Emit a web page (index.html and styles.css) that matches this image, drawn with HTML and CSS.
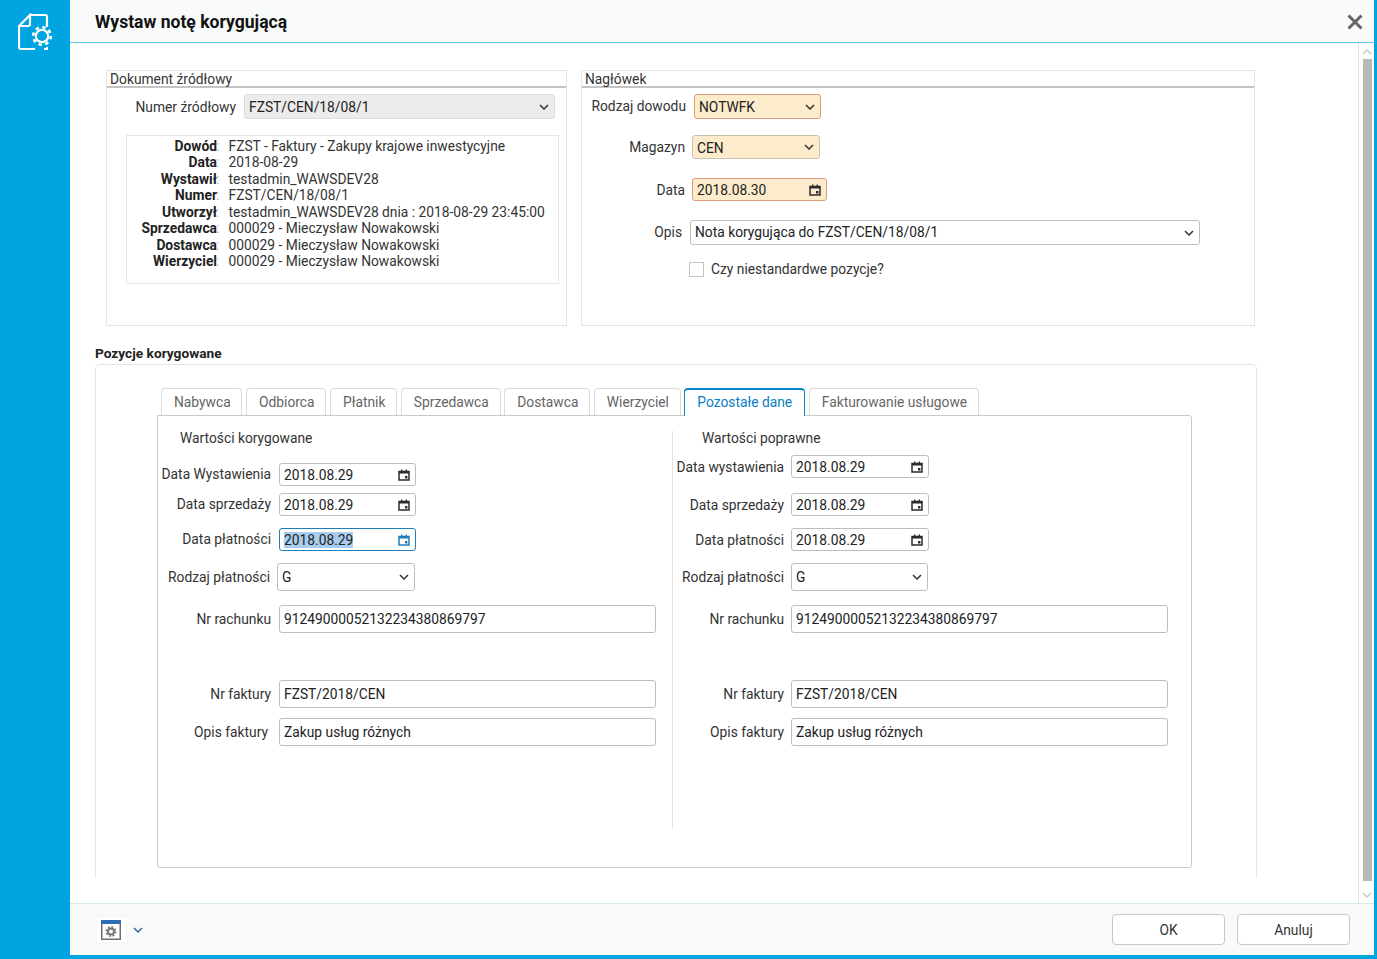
FILE: index.html
```html
<!DOCTYPE html>
<html lang="pl">
<head>
<meta charset="utf-8">
<title>Wystaw notę korygującą</title>
<link rel="stylesheet" href="styles.css">
</head>
<body>
<svg class="defs" width="0" height="0" aria-hidden="true">
  <symbol id="cal" viewBox="0 0 12 12">
    <path d="M1 2.5h10v8.5H1z" fill="none" stroke="currentColor" stroke-width="1.5"/>
    <path d="M1 2h10v2.6H1zM3 .6h1.4V2H3zM7.6.6H9V2H7.6zM7 7h2.4v2.4H7z" fill="currentColor"/>
  </symbol>
  <symbol id="chev" viewBox="0 0 10 6">
    <path d="M1 1l4 4 4-4" fill="none" stroke="currentColor" stroke-width="1.5"/>
  </symbol>
</svg>
<div class="shell">
  <aside class="sidebar">
    <svg class="doc-icon" width="36" height="40" viewBox="0 0 36 40">
      <path d="M12 2h15a2 2 0 0 1 2 2v10M17 36H3a2 2 0 0 1-2-2V13L12 2v9a2 2 0 0 1-2 2H1" fill="none" stroke="#fff" stroke-width="2.2"/>
      <path d="M29 34v2h-3" fill="none" stroke="#fff" stroke-width="2"/>
      <circle cx="24" cy="23" r="6.2" fill="none" stroke="#fff" stroke-width="2.2"/>
      <circle cx="24" cy="23" r="8.8" fill="none" stroke="#fff" stroke-width="2.6" stroke-dasharray="3.4 3.51"/>
    </svg>
  </aside>
  <main class="dialog">
    <header class="dialog-head">
      <h1 class="dialog-title">Wystaw notę korygującą</h1>
      <svg class="close" width="16" height="16" viewBox="0 0 16 16"><path d="M1.5 1.5l13 13M14.5 1.5l-13 13" stroke="#666" stroke-width="3" fill="none"/></svg>
    </header>
    <div class="scroll-area">
      <div class="content">
        <div class="panels">
          <section class="panel panel-src">
            <div class="panel-title">Dokument źródłowy</div>
            <div class="row src-row">
              <div class="lbl lbl-src">Numer źródłowy</div>
              <div class="field sel gray w-src"><span>FZST/CEN/18/08/1</span><svg class="chev"><use href="#chev"/></svg></div>
            </div>
            <div class="info">
              <div class="info-row"><b>Dowód<i>:</i></b><span>FZST - Faktury - Zakupy krajowe inwestycyjne</span></div>
              <div class="info-row"><b>Data<i>:</i></b><span>2018-08-29</span></div>
              <div class="info-row"><b>Wystawił<i>:</i></b><span>testadmin_WAWSDEV28</span></div>
              <div class="info-row"><b>Numer<i>:</i></b><span>FZST/CEN/18/08/1</span></div>
              <div class="info-row"><b>Utworzył<i>:</i></b><span>testadmin_WAWSDEV28 dnia : 2018-08-29 23:45:00</span></div>
              <div class="info-row"><b>Sprzedawca<i>:</i></b><span>000029 - Mieczysław Nowakowski</span></div>
              <div class="info-row"><b>Dostawca<i>:</i></b><span>000029 - Mieczysław Nowakowski</span></div>
              <div class="info-row"><b>Wierzyciel<i>:</i></b><span>000029 - Mieczysław Nowakowski</span></div>
            </div>
          </section>
          <section class="panel panel-head">
            <div class="panel-title">Nagłówek</div>
            <div class="row h-1">
              <div class="lbl lbl-h1 lbl-date">Rodzaj dowodu</div>
              <div class="field sel req err w-127"><span>NOTWFK</span><svg class="chev"><use href="#chev"/></svg></div>
            </div>
            <div class="row h-2">
              <div class="lbl lbl-h2">Magazyn</div>
              <div class="field sel sel-24 req w-128"><span>CEN</span><svg class="chev"><use href="#chev"/></svg></div>
            </div>
            <div class="row h-3">
              <div class="lbl lbl-h2">Data</div>
              <div class="field date req err w-135"><span>2018.08.30</span><svg class="cal"><use href="#cal"/></svg></div>
            </div>
            <div class="row h-4">
              <div class="lbl lbl-h4">Opis</div>
              <div class="field sel w-510"><span>Nota korygująca do FZST/CEN/18/08/1</span><svg class="chev"><use href="#chev"/></svg></div>
            </div>
            <div class="row h-5">
              <div class="check"></div>
              <div class="check-text">Czy niestandardwe pozycje?</div>
            </div>
          </section>
        </div>
        <h2 class="section-title">Pozycje korygowane</h2>
        <section class="card">
          <nav class="tabs">
            <div class="tab">Nabywca</div>
            <div class="tab">Odbiorca</div>
            <div class="tab">Płatnik</div>
            <div class="tab">Sprzedawca</div>
            <div class="tab">Dostawca</div>
            <div class="tab">Wierzyciel</div>
            <div class="tab active">Pozostałe dane</div>
            <div class="tab">Fakturowanie usługowe</div>
          </nav>
          <div class="tab-panel">
            <div class="col col-left">
              <div class="col-head">Wartości korygowane</div>
              <div class="row mt-18"><div class="lbl lbl-date">Data Wystawienia</div><div class="field date w-137"><span>2018.08.29</span><svg class="cal"><use href="#cal"/></svg></div></div>
              <div class="row mt-7"><div class="lbl lbl-date">Data sprzedaży</div><div class="field date w-137"><span>2018.08.29</span><svg class="cal"><use href="#cal"/></svg></div></div>
              <div class="row mt-12"><div class="lbl lbl-date">Data płatności</div><div class="field date w-137 focus"><span><mark class="sel-text">2018.08.29</mark></span><svg class="cal"><use href="#cal"/></svg></div></div>
              <div class="row mt-12"><div class="lbl lbl-tall lbl-short">Rodzaj płatności</div><div class="field sel tall w-138"><span>G</span><svg class="chev"><use href="#chev"/></svg></div></div>
              <div class="row mt-14"><div class="lbl lbl-tall">Nr rachunku</div><div class="field tall w-377"><span>91249000052132234380869797</span></div></div>
              <div class="row mt-47"><div class="lbl lbl-tall">Nr faktury</div><div class="field tall w-377"><span>FZST/2018/CEN</span></div></div>
              <div class="row mt-10"><div class="lbl lbl-tall lbl-opis">Opis faktury</div><div class="field tall w-377"><span>Zakup usług różnych</span></div></div>
            </div>
            <div class="col col-right">
              <div class="col-head">Wartości poprawne</div>
              <div class="row mt-10"><div class="lbl">Data wystawienia</div><div class="field date w-138"><span>2018.08.29</span><svg class="cal"><use href="#cal"/></svg></div></div>
              <div class="row mt-15"><div class="lbl">Data sprzedaży</div><div class="field date w-138"><span>2018.08.29</span><svg class="cal"><use href="#cal"/></svg></div></div>
              <div class="row mt-12"><div class="lbl">Data płatności</div><div class="field date w-138"><span>2018.08.29</span><svg class="cal"><use href="#cal"/></svg></div></div>
              <div class="row mt-12"><div class="lbl lbl-tall">Rodzaj płatności</div><div class="field sel tall w-137"><span>G</span><svg class="chev"><use href="#chev"/></svg></div></div>
              <div class="row mt-14"><div class="lbl lbl-tall">Nr rachunku</div><div class="field tall w-377"><span>91249000052132234380869797</span></div></div>
              <div class="row mt-47"><div class="lbl lbl-tall">Nr faktury</div><div class="field tall w-377"><span>FZST/2018/CEN</span></div></div>
              <div class="row mt-10"><div class="lbl lbl-tall">Opis faktury</div><div class="field tall w-377"><span>Zakup usług różnych</span></div></div>
            </div>
          </div>
        </section>
      </div>
      <div class="scrollbar">
        <svg class="sb-arrow" width="10" height="6" viewBox="0 0 10 6"><path d="M1 5l4-4 4 4" fill="none" stroke="#c4c4c4" stroke-width="1.4"/></svg>
        <div class="sb-thumb"></div>
        <svg class="sb-arrow" width="10" height="6" viewBox="0 0 10 6"><path d="M1 1l4 4 4-4" fill="none" stroke="#c4c4c4" stroke-width="1.4"/></svg>
      </div>
    </div>
    <footer class="dialog-foot">
      <div class="tool-box">
        <svg width="20" height="20" viewBox="0 0 20 20">
          <rect x=".75" y=".75" width="18.5" height="18.5" fill="#fff" stroke="#6f6f6f" stroke-width="1.5"/>
          <rect width="20" height="4" fill="#2f6db3"/>
          <circle cx="10" cy="11.5" r="3" fill="none" stroke="#777" stroke-width="2"/>
          <circle cx="10" cy="11.5" r="4.6" fill="none" stroke="#777" stroke-width="1.8" stroke-dasharray="1.8 1.8"/>
        </svg>
      </div>
      <svg class="tool-chev" width="10" height="6" viewBox="0 0 10 6"><path d="M1 1l4 4 4-4" fill="none" stroke="#2f5f96" stroke-width="1.4"/></svg>
      <div class="foot-actions">
        <div class="btn">OK</div>
        <div class="btn">Anuluj</div>
      </div>
    </footer>
  </main>
</div>
</body>
</html>
```

FILE: styles.css
```css
* { box-sizing: border-box; }
html, body { margin: 0; height: 100%; overflow: hidden; }
body { font: 13.8px/16px Roboto, "Liberation Sans", sans-serif; color: #333; }
.defs { position: absolute; }
.shell { display: flex; height: 959px; background: #00a4e1; }
.sidebar { width: 70px; flex: none; padding: 13px 0 0 18px; }
.doc-icon { display: block; }
.dialog { width: 1304px; height: 955px; background: #fff; display: flex; flex-direction: column; }

.dialog-head { height: 43px; flex: none; background: #f9fbfb; border-bottom: 1px solid #5fcbe8; display: flex; align-items: center; justify-content: space-between; padding: 1px 11px 0 25px; }
.dialog-title { margin: 0; font-size: 17.55px; line-height: 22px; font-weight: 700; color: #111; }
.close { margin-top: 1px; }

.scroll-area { flex: 1; display: flex; min-height: 0; }
.content { flex: 1; min-width: 0; padding: 27px 0 0 25px; }
.scrollbar { width: 16px; flex: none; border-left: 1px solid #e2e2e2; display: flex; flex-direction: column; align-items: center; padding: 6px 2px 0 3px; }
.sb-thumb { width: 9px; height: 822px; background: #b9b9b9; margin: 4px 0 11px; flex: none; }
.sb-arrow { flex: none; }

.panels { display: flex; gap: 14px; margin-left: 11px; }
.panel { height: 256px; border: 1px solid #e4e4e4; }
.panel-src { width: 461px; }
.panel-head { width: 674px; }
.panel-title { height: 17px; line-height: 16px; padding-left: 3px; border-bottom: 2px solid #c4c4c4; color: #333; }

.row { display: flex; align-items: center; }
.lbl { width: 113px; flex: none; text-align: right; margin-right: 8px; white-space: nowrap; }
.lbl-tall { padding-bottom: 1px; }
.lbl-date { padding-bottom: 2px; }
.lbl-short { width: 112px; margin-right: 7px; }
.lbl-opis { width: 110px; margin-right: 11px; }
.lbl-src { width: 129px; margin-right: 8px; }
.lbl-h1 { width: 104px; margin-right: 8px; }
.lbl-h2 { width: 103px; margin-right: 7px; }
.lbl-h4 { width: 100px; margin-right: 8px; padding-bottom: 1px; }
.src-row { margin-top: 6px; }
.h-1 { margin-top: 6px; }
.h-2 { margin-top: 16px; }
.h-2 .field span { top: 0.5px; }
.h-3 { margin-top: 19px; }
.h-4 { margin-top: 19px; }
.h-4 .field span { top: -0.5px; }
.h-5 { margin-top: 16px; padding-left: 107px; }

.field { height: 23px; border: 1px solid #bdbdbd; border-radius: 3px; background: #fff; display: flex; align-items: center; justify-content: space-between; padding: 0 4px; color: #222; flex: none; white-space: nowrap; }
.field span { position: relative; }
.sel { height: 25px; padding-right: 5px; }
.sel-24 { height: 24px; }
.tall { height: 28px; }
.tall span { top: -0.5px; }
.date { height: 23px; padding-right: 5px; }
.gray { background: #ececec; border-color: #dcdcdc; }
.req { background: #fdeccb; border-color: #c9c0ad; }
.err { border-color: #dd9a7c; }
.focus { border-color: #1f7fb8; color: #222; }
.focus .cal { color: #1f7fb8; }
.sel-text { background: #a9cdee; color: #222; }
.cal { width: 12px; height: 12px; color: #2b2b2b; flex: none; }
.chev { width: 10px; height: 6px; color: #333; flex: none; }
.w-src { width: 311px; }
.w-127 { width: 127px; }
.w-128 { width: 128px; }
.w-135 { width: 135px; }
.w-137 { width: 137px; }
.w-138 { width: 138px; }
.w-377 { width: 377px; }
.w-510 { width: 510px; }

.info { margin: 16px 0 0 19px; width: 433px; height: 149px; border: 1px solid #e6e6e6; padding-top: 2px; }
.info-row { display: flex; height: 16.45px; line-height: 16.45px; }
.info-row b { width: 90px; flex: none; text-align: right; color: #222; font-weight: 700; position: relative; }
.info-row i { position: absolute; left: 100%; font-style: normal; font-weight: 400; color: #bbb; margin-left: -1px; }
.info-row span { margin-left: 11.5px; white-space: nowrap; color: #333; }

.check { width: 15px; height: 15px; border: 1px solid #c4c4c4; background: #fff; flex: none; }
.check-text { margin-left: 7px; }

.section-title { margin: 20px 0 4px; font-size: 13.7px; line-height: 14px; font-weight: 700; color: #222; }
.card { width: 1162px; height: 514px; border: 1px solid #e6e6e6; border-bottom: 0; border-radius: 5px 5px 0 0; padding: 23px 0 0 61px; }
.tabs { display: flex; gap: 3.6px; margin-left: 4px; height: 27px; position: relative; z-index: 1; }
.tab { height: 27px; padding: 0 10.8px 0 12px; line-height: 27px; border: 1px solid #dcdcdc; border-bottom: 0; border-radius: 4px 4px 0 0; color: #666; background: #fff; white-space: nowrap; }
.tab.active { height: 28px; padding: 0 12px; color: #0a80c4; border-color: #0a84c6; border-top-width: 2px; line-height: 25px; }
.tab-panel { width: 1035px; height: 453px; border: 1px solid #c9c9c9; border-radius: 0 3px 3px 3px; display: flex; }
.col { margin-top: 15px; height: 397px; }
.col-left { width: 515px; border-right: 1px solid #e2e2e2; }
.col-right { flex: 1; }
.col-head { height: 14px; line-height: 14px; }
.col-left .col-head { padding-left: 22px; }
.col-right .col-head { padding-left: 29px; }
.col-right .lbl { width: 111px; margin-right: 7px; }
.mt-7 { margin-top: 7px; }
.mt-10 { margin-top: 10px; }
.mt-12 { margin-top: 12px; }
.mt-14 { margin-top: 14px; }
.mt-15 { margin-top: 15px; }
.mt-18 { margin-top: 18px; }
.mt-47 { margin-top: 47px; }

.dialog-foot { height: 52px; flex: none; background: #f8fafa; border-top: 1px solid #d5e8ee; display: flex; align-items: center; padding: 0 24px 0 27px; border-radius: 0 0 0 3px; }
.tool-box { width: 29px; height: 24px; background: #fff; display: flex; align-items: center; padding-left: 4px; }
.tool-chev { margin-left: 7px; }
.foot-actions { margin-left: auto; display: flex; gap: 12px; }
.btn { width: 113px; height: 31px; border: 1px solid #c8c8c8; border-radius: 4px; background: #fff; text-align: center; line-height: 30px; color: #333; }
```
